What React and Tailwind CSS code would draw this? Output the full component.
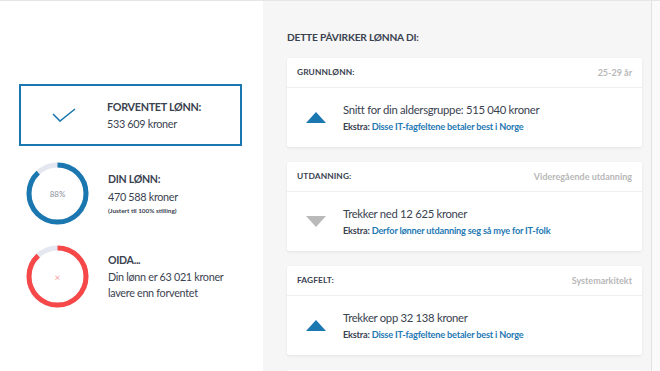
import React from 'react';

const FONT = { fontFamily: 'Lato, "Noto Sans", sans-serif' };

const FACTORS = [
  {
    title: 'Grunnlønn:',
    meta: '25-29 år',
    up: true,
    text: 'Snitt for din aldersgruppe: 515 040 kroner',
    link: 'Disse IT-fagfeltene betaler best i Norge',
  },
  {
    title: 'Utdanning:',
    meta: 'Videregående utdanning',
    up: false,
    text: 'Trekker ned 12 625 kroner',
    link: 'Derfor lønner utdanning seg så mye for IT-folk',
  },
  {
    title: 'Fagfelt:',
    meta: 'Systemarkitekt',
    up: true,
    text: 'Trekker opp 32 138 kroner',
    link: 'Disse IT-fagfeltene betaler best i Norge',
  },
];

const Ring = ({ color, children }) => {
  const r = 28.5;
  const c = 2 * Math.PI * r;
  return (
    <div className="relative w-[63px] h-[63px] shrink-0">
      <svg width="63" height="63" viewBox="0 0 63 63">
        <circle cx="31.5" cy="31.5" r={r} fill="none" stroke="#e4e7ef" strokeWidth="5" />
        <circle
          cx="31.5"
          cy="31.5"
          r={r}
          fill="none"
          stroke={color}
          strokeWidth="5"
          strokeDasharray={`${c * 0.88} ${c}`}
          transform="rotate(-90 31.5 31.5)"
        />
      </svg>
      <div className="absolute inset-0 flex items-center justify-center">{children}</div>
    </div>
  );
};

const FactorCard = ({ f }) => (
  <div className="bg-white rounded-[2px] shadow-[0_1px_3px_rgba(0,0,0,0.08)] mb-[15px]">
    <div className="h-[30px] flex items-center justify-between px-[10px] border-b border-[#eef0f3]">
      <span className="text-[8.4px] font-bold uppercase tracking-[0.1px] text-[#3a4250]">{f.title}</span>
      <span className="text-[9px] font-bold text-[#b8b8b8]">{f.meta}</span>
    </div>
    <div className="h-[59px] flex items-center">
      <div className="w-[56px] flex justify-center pl-[2px]">
        {f.up ? (
          <svg width="20" height="11" viewBox="0 0 20 11">
            <polygon points="10,0 20,11 0,11" fill="#1a77b0" />
          </svg>
        ) : (
          <svg width="20" height="11" viewBox="0 0 20 11">
            <polygon points="0,0 20,0 10,11" fill="#b9b9b9" />
          </svg>
        )}
      </div>
      <div className="flex flex-col">
        <span className="text-[11.3px] tracking-[-0.3px] text-[#3a4250] leading-[18px]">{f.text}</span>
        <span className="text-[9.2px] tracking-[-0.2px] leading-[16px] text-[#3a4250] font-bold">
          Ekstra: <span className="text-[#1f79b4]">{f.link}</span>
        </span>
      </div>
    </div>
  </div>
);

export default function App() {
  return (
    <div className="w-[660px] h-[371px] overflow-hidden flex border-t border-[#e6e6e6]" style={FONT}>
      <div className="w-[263px] shrink-0 bg-white pl-[19px] pr-[21px] pt-[83px]">
        <div className="h-[62px] border-2 border-[#1a77b0] flex items-center">
          <div className="w-[86px] flex justify-center">
            <svg width="24" height="14" viewBox="0 0 24 14">
              <polyline points="1,6 8,13 23,1" fill="none" stroke="#1a77b0" strokeWidth="1.6" />
            </svg>
          </div>
          <div className="flex flex-col text-[#3a4250] tracking-[-0.3px]">
            <span className="text-[10.8px] font-bold leading-[17px]">FORVENTET LØNN:</span>
            <span className="text-[10.8px] leading-[17px]">533 609 kroner</span>
          </div>
        </div>

        <div className="flex items-center mt-[16px] pl-[7px]">
          <Ring color="#1a77b0">
            <span className="text-[8px] text-[#8a8f98]">88%</span>
          </Ring>
          <div className="flex flex-col ml-[19px] text-[#3a4250] tracking-[-0.3px]">
            <span className="text-[10.6px] font-bold leading-[17px]">DIN LØNN:</span>
            <span className="text-[10.8px] leading-[17px]">470 588 kroner</span>
            <span className="text-[6.4px] font-bold leading-[12px] tracking-normal">(Justert til 100% stilling)</span>
          </div>
        </div>

        <div className="flex items-center mt-[20px] pl-[7px]">
          <Ring color="#f64848">
            <span className="text-[10px] text-[#f6a0a0] leading-none">×</span>
          </Ring>
          <div className="flex flex-col ml-[19px] text-[#3a4250] tracking-[-0.3px]">
            <span className="text-[10.6px] font-bold leading-[17px]">OIDA...</span>
            <span className="text-[10.8px] leading-[16px]">Din lønn er 63 021 kroner</span>
            <span className="text-[10.8px] leading-[16px]">lavere enn forventet</span>
          </div>
        </div>
      </div>

      <div className="flex-1 bg-[#f6f6f6] pl-[24px] pr-[9px] pt-[28px] overflow-hidden">
        <h2 className="text-[10.2px] font-bold text-[#3a4250] tracking-[-0.2px] leading-[16px] mb-[13px]">
          DETTE PÅVIRKER LØNNA DI:
        </h2>
        {FACTORS.map((f, i) => (
          <FactorCard key={i} f={f} />
        ))}
        <div className="bg-white rounded-[2px] shadow-[0_1px_3px_rgba(0,0,0,0.08)] h-[30px]" />
      </div>

      <div className="w-[9px] shrink-0 bg-[#fafafa] border-l border-[#e2e2e2]" />
    </div>
  );
}
